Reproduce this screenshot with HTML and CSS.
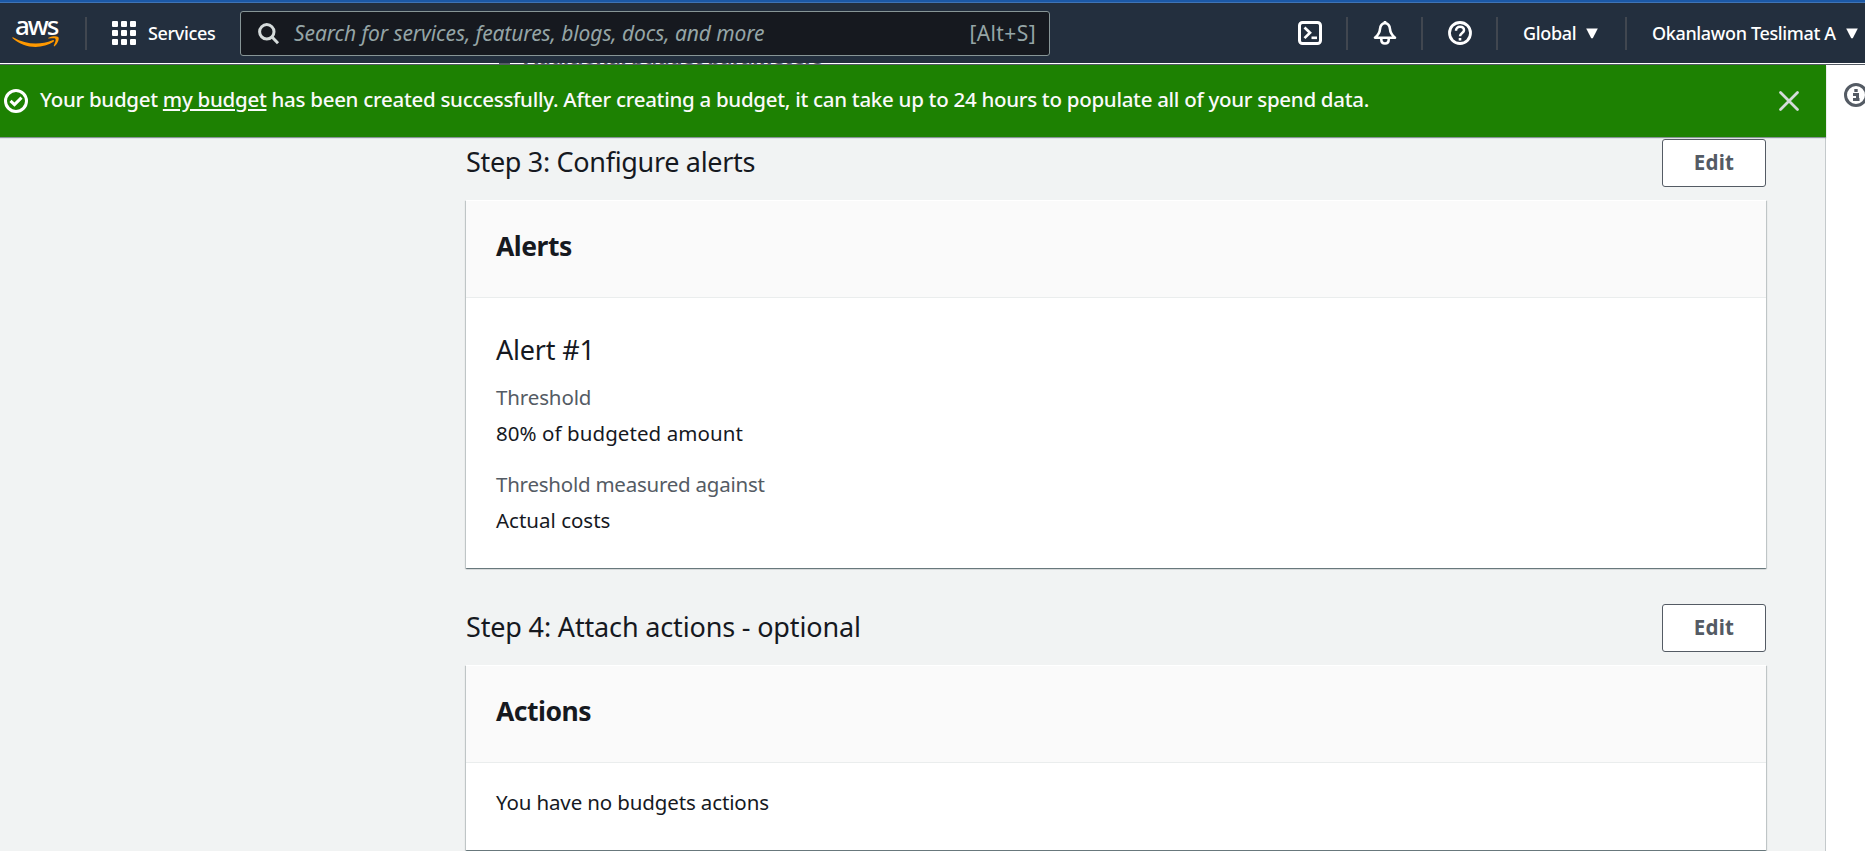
FILE: index.html
```
<!DOCTYPE html>
<html lang="en">
<head>
<meta charset="utf-8">
<title>AWS Budgets</title>
<link rel="stylesheet" href="styles.css">
</head>
<body>
<div class="strip"></div>
<header class="nav">
  <a class="logo">
    <span class="logo-text">aws</span>
    <svg class="smile" width="48" height="12" viewBox="0 0 48 12"><path d="M.6 2.2C0 1.600.6.9 1.400 1.400 14 8.600 28 9.200 40.500 4.200c1.300-.5 2.300.6 1 1.600C30 13.400 12 12.800.6 2.200z" fill="#f90"/><path d="M36.500 1.800c3.600-1.600 8-1.900 9.700-.9 1.400 1.400-.1 6.200-3.400 9.200-.7.600-1.300.2-1-.5.900-2.200 2.400-5.700 1.700-6.700-.7-.9-4.200-.6-6.500-.3-.8.1-1.100-.5-.5-.8z" fill="#f90"/></svg>
  </a>
  <i class="rule"></i>
  <a class="services">
    <svg width="24" height="24" viewBox="0 0 24 24" fill="#fff"><rect width="6" height="6" rx="1"/><rect x="9" width="6" height="6" rx="1"/><rect x="18" width="6" height="6" rx="1"/><rect y="9" width="6" height="6" rx="1"/><rect x="9" y="9" width="6" height="6" rx="1"/><rect x="18" y="9" width="6" height="6" rx="1"/><rect y="18" width="6" height="6" rx="1"/><rect x="9" y="18" width="6" height="6" rx="1"/><rect x="18" y="18" width="6" height="6" rx="1"/></svg>
    <span class="nav-text">Services</span>
  </a>
  <div class="search">
    <svg width="22" height="22" viewBox="0 0 22 22" fill="none" stroke="#d5dbdb" stroke-width="3"><circle cx="8.800" cy="8.800" r="7.200"/><path d="M13.800 13.800l6.200 6.400"/></svg>
    <span class="placeholder">Search for services, features, blogs, docs, and more</span>
    <span class="shortcut">[Alt+S]</span>
  </div>
  <div class="tools">
    <a class="tool"><svg width="24" height="24" viewBox="0 0 24 24" fill="none" stroke="#fff" stroke-width="3"><rect x="1.500" y="1.500" width="21" height="21" rx="3"/><path d="M6.500 6.500l5.500 5.300-5.500 5.300" stroke-width="2.700"/><path d="M13.500 16.800h5.500" stroke-width="2.600"/></svg></a>
    <i class="rule"></i>
    <a class="tool"><svg width="24" height="24" viewBox="0 0 24 24" fill="none" stroke="#fff" stroke-width="2.600" stroke-linejoin="round"><path d="M12 2C9 2.400 7.300 4.600 7 8c-.2 3.800-2 6.200-5 8.700h20C19 14.200 17.200 11.800 17 8c-.3-3.400-2-5.600-5-6z"/><path d="M12 0v3"/><path d="M8.300 17v1.500c0 2.500 1.500 4 3.700 4s3.700-1.500 3.700-4V17"/></svg></a>
    <i class="rule"></i>
    <a class="tool"><svg width="24" height="24" viewBox="0 0 24 24" fill="none" stroke="#fff" stroke-width="2.800"><circle cx="12" cy="12" r="10.500"/><path d="M8 9.700c0-2.400 1.600-4 4-4s4 1.400 4 3.500c0 2.700-4 2.900-4 6.100" stroke-width="2.500"/><path d="M12 17v2.500" stroke-width="2.600"/></svg></a>
    <i class="rule"></i>
    <a class="menu region"><span class="nav-text">Global</span><svg width="12" height="11" viewBox="0 0 12 11"><path d="M.2.500h11.600L6.800 10.300h-1.600z" fill="#fff"/></svg></a>
    <i class="rule"></i>
    <a class="menu account"><span class="nav-text">Okanlawon Teslimat A</span><svg width="12" height="11" viewBox="0 0 12 11"><path d="M.2.500h11.600L6.800 10.300h-1.600z" fill="#fff"/></svg></a>
  </div>
</header>
<div class="peek"><i class="peek-caret"></i><span class="peek-text">Additional budget parameters</span></div>
<div class="frame">
  <main class="main">
    <div class="flash">
      <svg width="24" height="24" viewBox="0 0 24 24" fill="none" stroke="#fff" stroke-width="3"><circle cx="12" cy="12" r="10.500"/><path d="M6.500 11.800l4 3.800 7-7"/></svg>
      <span class="flash-text">Your budget <a class="flash-link">my budget</a> has been created successfully. After creating a budget, it can take up to 24 hours to populate all of your spend data.</span>
      <svg class="close" width="20" height="20" viewBox="0 0 20 20" fill="none" stroke="#d5dbdb" stroke-width="2.800" stroke-linecap="round"><path d="M1.500 1.500l17 17M18.500 1.500l-17 17"/></svg>
    </div>
    <div class="content">
      <section class="step">
        <div class="step-head"><h2 class="step-title step3">Step 3: Configure alerts</h2><button class="edit"><span class="edit-text">Edit</span></button></div>
        <div class="card">
          <div class="card-head"><h3 class="card-title">Alerts</h3></div>
          <div class="card-body alert-body">
            <h4 class="alert-title">Alert #1</h4>
            <dl class="pairs">
              <div class="pair"><dt>Threshold</dt><dd class="amount">80% of budgeted amount</dd></div>
              <div class="pair"><dt class="against">Threshold measured against</dt><dd>Actual costs</dd></div>
            </dl>
          </div>
        </div>
      </section>
      <section class="step">
        <div class="step-head"><h2 class="step-title">Step 4: Attach actions - optional</h2><button class="edit"><span class="edit-text">Edit</span></button></div>
        <div class="card">
          <div class="card-head"><h3 class="card-title">Actions</h3></div>
          <div class="card-body"><p class="empty">You have no budgets actions</p></div>
        </div>
      </section>
    </div>
  </main>
  <aside class="panel">
    <svg width="24" height="24" viewBox="0 0 24 24" fill="none" stroke="#545b64"><circle cx="12" cy="12" r="10.500" stroke-width="3"/><path d="M10.300 7.500h3.400M9 11.500h4.500V17M9 16.500h6.500" stroke-width="3"/></svg>
  </aside>
</div>
</body>
</html>
```
FILE: styles.css
```
* { box-sizing: border-box; }
body {
  margin: 0;
  height: 851px;
  overflow: hidden;
  display: flex;
  flex-direction: column;
  background: #fff;
  color: #16191f;
  font-family: "Noto Sans", "Open Sans", sans-serif;
  font-size: 20.5px;
  line-height: 30px;
}
svg { display: block; flex: none; overflow: visible; }
h2, h3, h4, p, dl, dd { margin: 0; font-weight: 400; }

.strip { flex: none; height: 3px; background: #1b58a6; border-bottom: 1px solid #3f74b5; }

/* top navigation */
.nav {
  flex: none;
  height: 60px;
  display: flex;
  align-items: center;
  background: #232f3e;
  color: #fff;
}
.logo { width: 85px; padding: 14px 0 0 12px; height: 60px; }
.logo-text {
  display: block;
  height: 18px;
  margin-left: 3px;
  line-height: 16px;
  font-size: 26px;
  font-weight: 500;
  letter-spacing: -2px;
}
.smile { margin-top: 1px; }
.rule { flex: none; width: 2px; height: 33px; margin-top: 1px; background: #414750; }
.services { display: flex; align-items: center; gap: 12px; width: 153px; padding-left: 25px; }
.nav-text { font-size: 18px; font-weight: 500; letter-spacing: -.35px; line-height: 24px; margin-top: -1px; white-space: nowrap; }
.search {
  width: 810px;
  height: 45px;
  margin-top: 1px;
  display: flex;
  align-items: center;
  padding: 0 13px 0 17px;
  border: 1px solid #879596;
  border-radius: 3px;
  background: #16191f;
  color: #95a5a6;
  font-size: 21px;
}
.placeholder { flex: 1; margin: -2px 0 0 14px; font-style: italic; letter-spacing: -.09px; white-space: nowrap; }
.shortcut { margin-top: -2px; letter-spacing: .4px; }
.tools { flex: 1; display: flex; align-items: center; justify-content: flex-end; }
.tool { width: 73px; padding-left: 25px; }
.menu { display: flex; align-items: center; justify-content: space-between; }
.region { width: 127px; padding: 0 27px 0 25px; }
.account { width: 238px; padding: 0 7px 0 25px; }

/* row of scrolled content visible between the navigation and the flash bar */
.peek { flex: none; position: relative; height: 2px; overflow: hidden; background: #fff; border-bottom: 1px solid #545b64; }
.peek-caret { position: absolute; left: 499px; top: 0; width: 11px; height: 1px; background: #545b64; }
.peek-text { position: absolute; left: 524px; top: -22px; font-weight: 700; letter-spacing: -.35px; color: #545b64; white-space: nowrap; }

.frame { flex: 1; min-height: 0; display: flex; }
.main { width: 1826px; background: #f1f3f3; border-right: 1px solid #c4c9cb; }

.flash {
  position: relative;
  height: 72px;
  margin-right: -1px;
  padding: 0 27px 0 4px;
  display: flex;
  align-items: center;
  background: #1d8102;
  color: #fafafa;
  box-shadow: 0 1px 1px #879596;
}
.flash-text { flex: 1; margin: -4px 0 0 12px; font-weight: 500; letter-spacing: -.285px; white-space: nowrap; }
.flash-link { text-decoration: underline; text-decoration-thickness: 2px; text-underline-offset: 2px; }

/* wizard review steps */
.content { padding: 2px 59px 0 466px; display: flex; flex-direction: column; gap: 36px; }
.step { display: flex; flex-direction: column; gap: 13px; }
.step-head { display: flex; align-items: center; justify-content: space-between; height: 48px; }
.step-title { font-size: 27px; line-height: 36px; letter-spacing: -.16px; margin-top: -3px; }
.step3 { letter-spacing: -.32px; }
.edit {
  width: 104px;
  height: 48px;
  padding: 0;
  border: 1px solid #545b64;
  border-radius: 3px;
  background: #fff;
  color: #545b64;
  font: 700 20.5px/30px "Noto Sans", "Open Sans", sans-serif;
}
.edit-text { display: block; margin-top: -2px; letter-spacing: .2px; }
.card { background: #fff; box-shadow: 0 1px 1px 0 rgba(0, 28, 36, .4), 1px 1px 1px 0 rgba(0, 28, 36, .15), -1px 1px 1px 0 rgba(0, 28, 36, .15); }
.card-head { height: 98px; padding: 29px 30px 0; background: #fafafa; border-top: 1px solid #fff; border-bottom: 1px solid #eaeded; }
.card-title { font-size: 26.5px; line-height: 32px; font-weight: 700; letter-spacing: -.5px; }
.card-body { padding: 24px 30px 33px; }
.alert-body { padding-top: 36px; }
.alert-title { font-size: 27px; line-height: 32px; letter-spacing: -.2px; }
.pairs { margin-top: 16px; display: flex; flex-direction: column; gap: 21px; }
.pair { display: flex; flex-direction: column; gap: 6px; }
.pair dt { color: #545b64; letter-spacing: -.13px; }
.pair .against { letter-spacing: -.24px; }
.pair .amount { letter-spacing: .07px; }
.empty { letter-spacing: -.13px; }

.panel { flex: 1; padding: 18px 0 0 18px; overflow: hidden; background: #fff; }
```
